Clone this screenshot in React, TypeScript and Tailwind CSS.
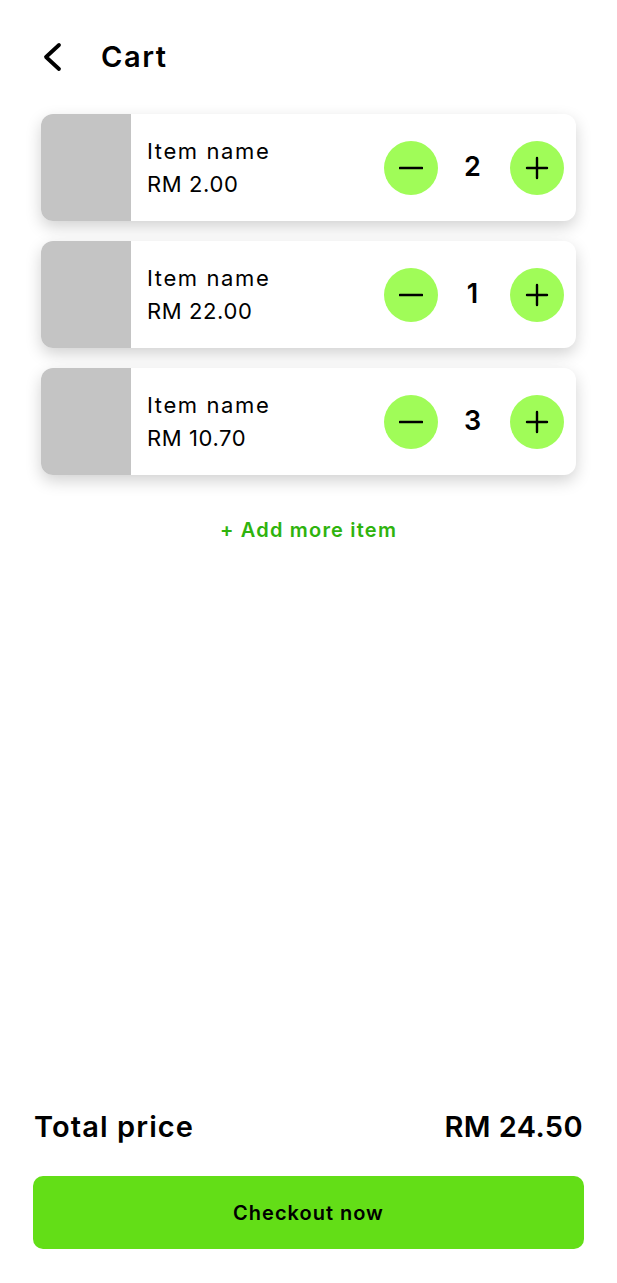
import React from "react";

const ITEMS = [
  { name: "Item name", price: "RM 2.00", qty: 2 },
  { name: "Item name", price: "RM 22.00", qty: 1 },
  { name: "Item name", price: "RM 10.70", qty: 3 },
];

function Minus() {
  return (
    <svg width="24" height="24" viewBox="0 0 24 24" fill="none">
      <path d="M1 12h22" stroke="#000" strokeWidth="2.6" strokeLinecap="round" />
    </svg>
  );
}

function Plus() {
  return (
    <svg width="24" height="24" viewBox="0 0 24 24" fill="none">
      <path d="M2 12h20M12 2v20" stroke="#000" strokeWidth="2.4" strokeLinecap="round" />
    </svg>
  );
}

export default function App() {
  return (
    <div
      className="flex h-[1283px] w-[617px] flex-col bg-white text-black"
      style={{ fontFamily: "Inter, 'Liberation Sans', sans-serif" }}
    >
      <header className="flex items-center pl-[42px] pt-[40px]">
        <svg width="20" height="30" viewBox="0 0 20 30" fill="none">
          <path d="M17 3L4 15l13 12" stroke="#000" strokeWidth="3.8" strokeLinecap="round" strokeLinejoin="round" />
        </svg>
        <h1 className="ml-[39px] text-[29px] font-semibold leading-[34px] tracking-[1.6px]">Cart</h1>
      </header>

      <section className="mt-[40px] flex flex-col gap-[20px] px-[41px]">
        {ITEMS.map((it, i) => (
          <div
            key={i}
            className="flex h-[107px] items-center overflow-hidden rounded-[12px] bg-white shadow-[0_6px_16px_rgba(0,0,0,0.18)]"
          >
            <div className="h-full w-[90px] shrink-0 bg-[#c4c4c4]" />
            <div className="ml-[16px] flex flex-1 flex-col">
              <span className="text-[22px] leading-[30px] tracking-[1.6px]">{it.name}</span>
              <span className="mt-[3px] text-[22px] leading-[30px] tracking-[0.6px]">{it.price}</span>
            </div>
            <div className="mr-[12px] flex items-center">
              <button className="flex h-[54px] w-[54px] items-center justify-center rounded-full bg-[#a0fc58]">
                <Minus />
              </button>
              <span className="w-[72px] pr-[3px] text-center text-[27px] font-semibold">{it.qty}</span>
              <button className="flex h-[54px] w-[54px] items-center justify-center rounded-full bg-[#a0fc58]">
                <Plus />
              </button>
            </div>
          </div>
        ))}
      </section>

      <p className="mt-[40px] text-center text-[20px] font-semibold tracking-[1.2px] text-[#2fb30d]">+ Add more item</p>

      <footer className="mt-auto px-[33px] pb-[34px]">
        <div className="flex items-center justify-between px-[1px] text-[29px] font-semibold">
          <span className="tracking-[1.1px]">Total price</span>
          <span className="tracking-[0.4px]">RM 24.50</span>
        </div>
        <button className="mt-[28px] flex h-[73px] w-full items-center justify-center rounded-[10px] bg-[#63de17] text-[20px] font-semibold tracking-[1px]">
          Checkout now
        </button>
      </footer>
    </div>
  );
}
